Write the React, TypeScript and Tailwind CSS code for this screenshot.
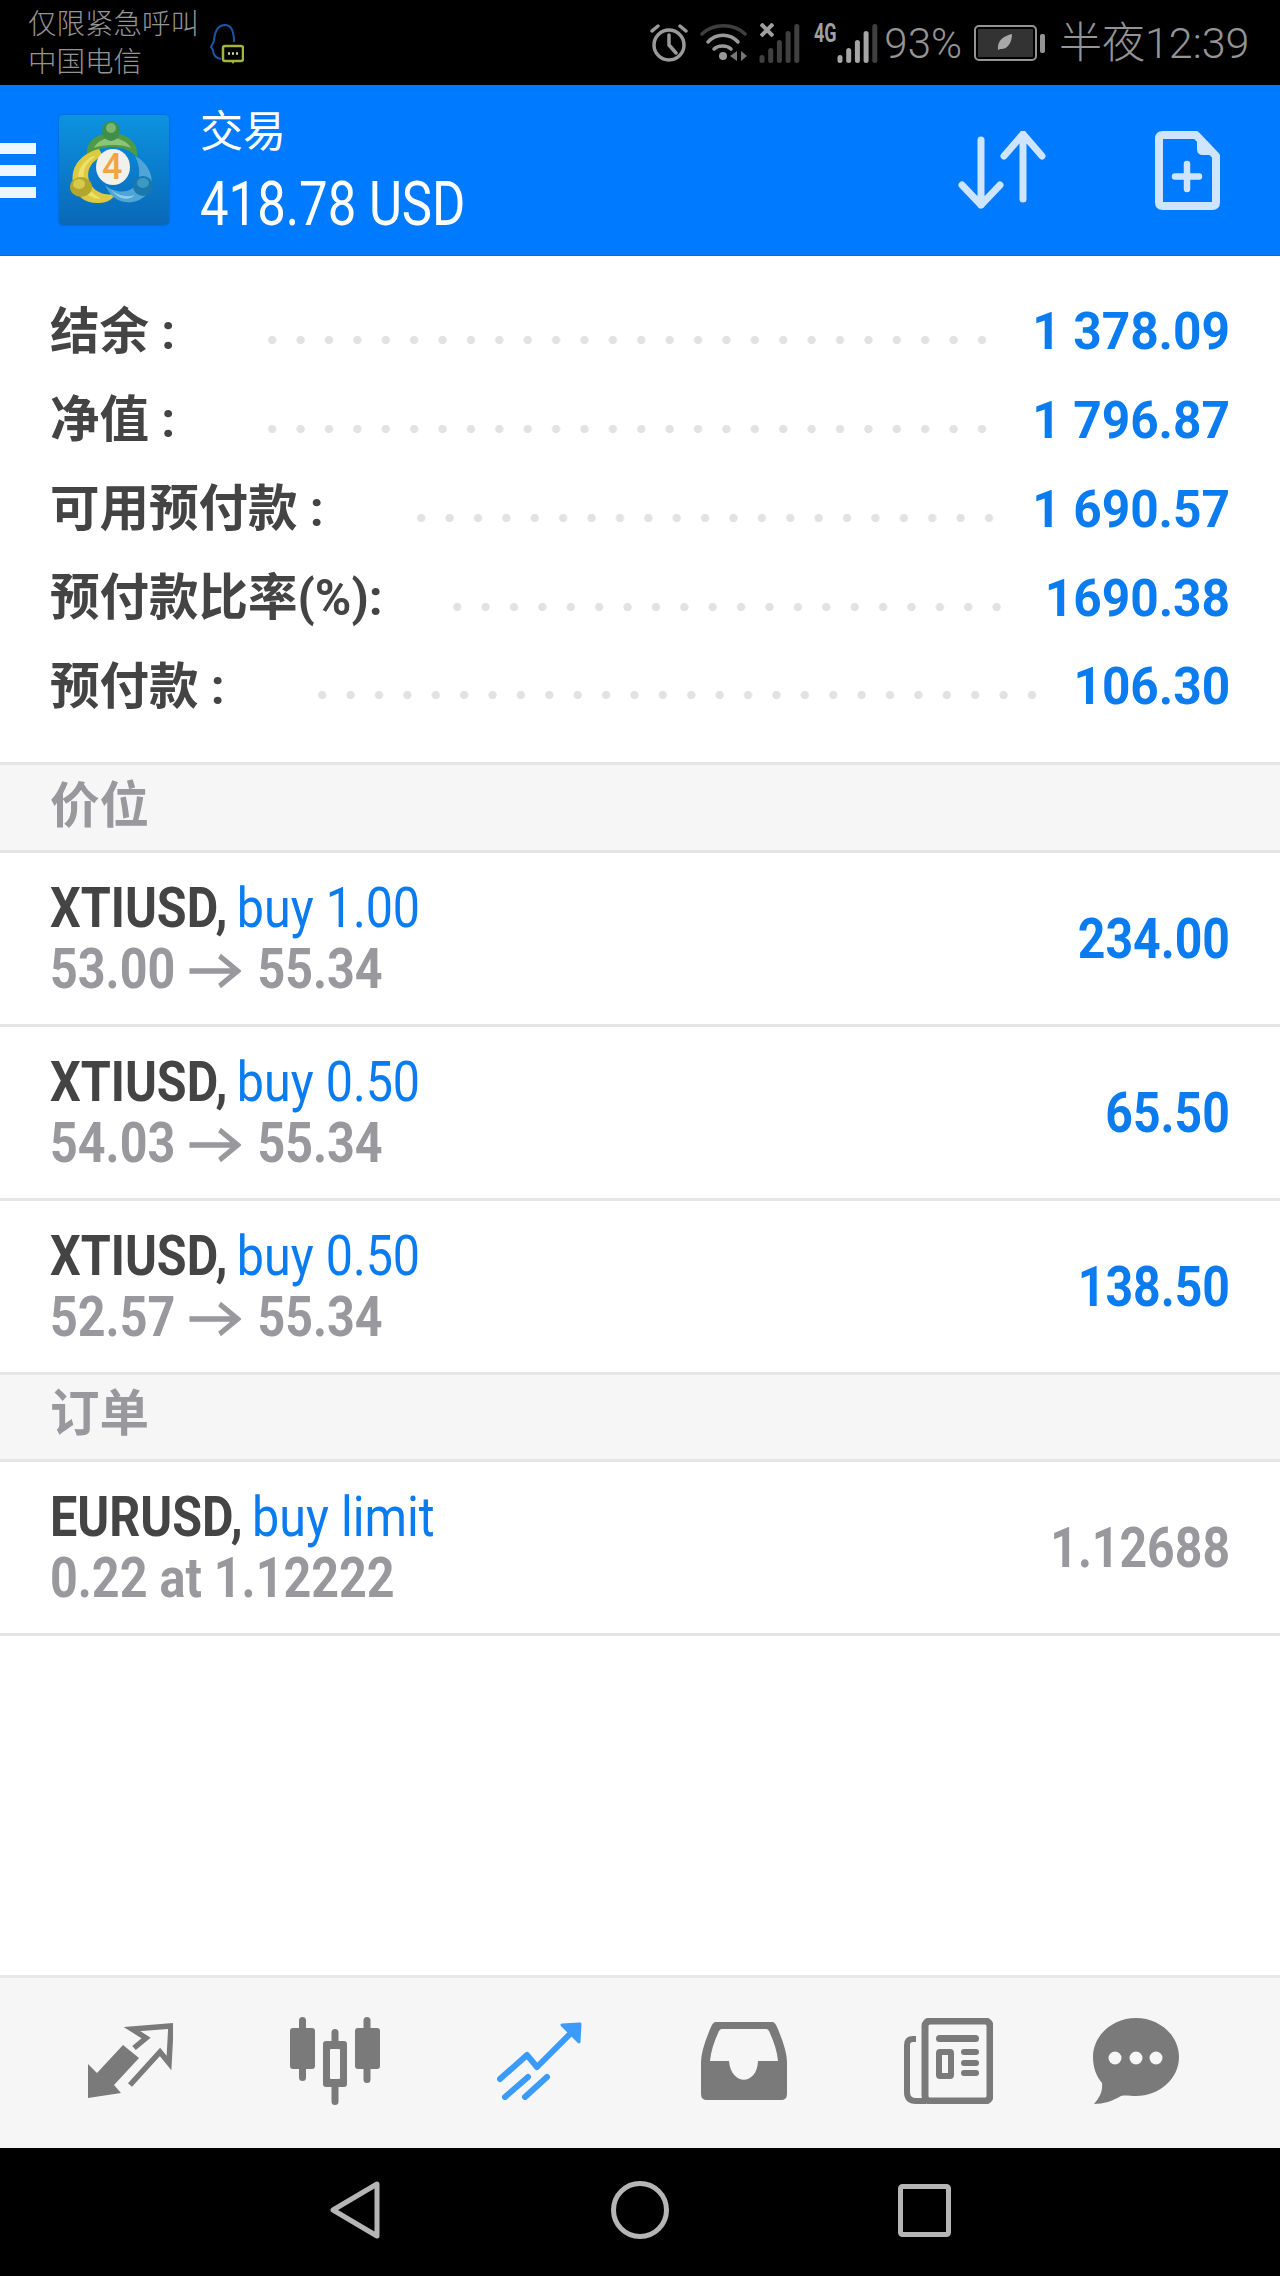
const CJK = "font-['Roboto','Noto_Sans_CJK_SC',sans-serif]";

const balances = [
  { label: "结余 :", value: "1 378.09", gap: "ml-[83px]" },
  { label: "净值 :", value: "1 796.87", gap: "ml-[83px]" },
  { label: "可用预付款 :", value: "1 690.57", gap: "ml-[83px]" },
  { label: "预付款比率(%):", value: "1690.38", gap: "ml-[60px]" },
  { label: "预付款 :", value: "106.30", gap: "ml-[83px]" },
];

const positions = [
  { type: "buy 1.00", from: "53.00", to: "55.34", profit: "234.00" },
  { type: "buy 0.50", from: "54.03", to: "55.34", profit: "65.50" },
  { type: "buy 0.50", from: "52.57", to: "55.34", profit: "138.50" },
];

function BalanceRow({ label, value, gap }: { label: string; value: string; gap: string }) {
  return (
    <div className="flex h-[88.75px] items-center">
      <span className="whitespace-nowrap text-[49.500px] leading-none font-bold text-[#444444]">{label}</span>
      <div className={`mt-[16px] mr-[24px] h-[10px] flex-1 bg-[radial-gradient(circle,#e2e2e4_3.8px,transparent_4.4px)] bg-[length:28.4px_10px] bg-repeat-x ${gap}`} />
      <span className="origin-right scale-x-[0.955] whitespace-nowrap text-[52px] leading-none font-bold text-[#0a7cf0]">{value}</span>
    </div>
  );
}

function SectionTitle({ title, height }: { title: string; height: string }) {
  return (
    <div className={`flex items-center border-y-[3px] border-[#e5e5e7] bg-[#f6f6f7] px-[50px] text-[49.500px] font-bold text-[#98989d] ${height}`}>
      {title}
    </div>
  );
}

function TradeRow({ name, type, sub, right, rightClass }: { name: string; type: string; sub: React.ReactNode; right: string; rightClass: string }) {
  return (
    <div className="flex h-[171px] items-center justify-between px-[50px]">
      <div className="origin-left scale-x-[0.865] text-[56px] leading-[61px] whitespace-nowrap">
        <div>
          <span className="font-bold text-[#444444]">{name}, </span>
          <span className="ml-[-3px] text-[#0a7cf0]">{type}</span>
        </div>
        <div className="font-bold text-[#98989d]">{sub}</div>
      </div>
      <span className={`origin-right scale-x-[0.86] text-[56px] leading-none font-bold ${rightClass}`}>{right}</span>
    </div>
  );
}

function Move({ from, to }: { from: string; to: string }) {
  return (
    <>
      {from}
      <svg viewBox="0 0 60 40" className="mr-[19px] ml-[16px] inline-block h-[40px] w-[60px] align-[-3px]" fill="none" stroke="#98989d" strokeWidth="5.5">
        <path d="M0 20H56M35 5L56 20L35 35" />
      </svg>
      {to}
    </>
  );
}

function Logo() {
  return (
    <div className="relative h-[110px] w-[110px] shrink-0 rounded-[4px] bg-gradient-to-b from-[#0c93e0] to-[#0a68b8] shadow-[0_0_2px_#0a5aa0]">
      <svg viewBox="0 0 110 110" className="absolute inset-0 h-full w-full">
        <path d="M28 40C26 26 40 18 52 18C66 18 80 26 78 42C70 34 62 32 54 32C46 32 36 34 28 40Z" fill="#4f9a45" />
        <path d="M35 33C38 26 46 23 52 23C60 23 68 26 72 33C64 29 44 29 35 33Z" fill="#8cc47a" />
        <ellipse cx="52" cy="16" rx="9" ry="10" fill="#3f8f4a" />
        <ellipse cx="52" cy="13" rx="5" ry="5" fill="#78b870" />
        <path d="M40 34C24 38 11 50 14 68C16 82 28 89 40 88C48 88 54 84 58 78C48 82 36 78 31 68C26 56 32 46 44 41Z" fill="#dccb42" />
        <path d="M34 41C24 46 17 56 20 67C23 78 33 84 42 84C35 79 27 74 25 64C23 55 28 47 36 42Z" fill="#efe06a" />
        <ellipse cx="22" cy="72" rx="11" ry="10" fill="#b3a62e" />
        <ellipse cx="20" cy="69" rx="6" ry="5" fill="#d6c94c" />
        <path d="M76 41C88 47 95 60 92 71C89 83 76 89 66 87C56 86 50 78 46 70C54 77 66 79 74 73C82 66 82 52 76 41Z" fill="#4fa6d6" />
        <path d="M52 75C58 80 68 83 76 80C70 86 60 85 52 75Z" fill="#8fd0ea" />
        <ellipse cx="84" cy="71" rx="10" ry="10" fill="#1a78ac" />
        <ellipse cx="84" cy="68" rx="6" ry="5" fill="#3b9ac4" />
        <ellipse cx="54" cy="52" rx="17" ry="18" fill="#f2f0ea" />
      </svg>
      <span className="absolute top-[31px] left-[43px] text-[36px] leading-[42px] font-medium text-[#f0a640]">4</span>
    </div>
  );
}

function Alarm() {
  return (
    <svg viewBox="0 0 38 40" className="h-[40px] w-[38px]" fill="none" stroke="#999999" strokeWidth="3.5" strokeLinecap="round">
      <circle cx="19" cy="22" r="15" />
      <path d="M19 12V22L26 30M2 8L8 3M36 8L30 3" />
    </svg>
  );
}

function Wifi() {
  return (
    <svg viewBox="0 0 47 39" className="ml-[12px] h-[39px] w-[47px]" fill="none" stroke="#999999" strokeWidth="3.5" strokeLinecap="round">
      <path d="M2 11C13 0 34 0 45 11" stroke="#3f3f3f" />
      <path d="M8 19C16 10 30 10 38 19M14 26C18 22 27 22 31 26" />
      <circle cx="23" cy="33" r="4" fill="#999999" stroke="none" />
      <path d="M37 28V38L30 33ZM41 28V38L47 33Z" fill="#777777" stroke="none" />
    </svg>
  );
}

function SimBars({ bright }: { bright: number }) {
  const heights = [8, 15, 23, 32, 39];
  return (
    <svg viewBox="0 0 41 39" className="h-[39px] w-[41px]">
      {heights.map((h, i) => (
        <rect key={i} x={i * 8.7 + 0.5} y={39 - h} width="5" height={h} rx="2.5" fill={i < bright ? "#a5a5a5" : "#404040"} />
      ))}
    </svg>
  );
}

function StatusBar() {
  return (
    <div className="flex h-[85px] shrink-0 items-center bg-black pl-[28px] text-[#949494]">
      <div className="w-[180px] pt-[3px] text-[28.500px] leading-[38px] font-light whitespace-nowrap">
        <div>仅限紧急呼叫</div>
        <div>中国电信</div>
      </div>
      <svg viewBox="0 0 36 44" className="mt-[2px] h-[44px] w-[36px]" fill="none">
        <path d="M26 20C26 9 23 3 17 3C10 3 7 9 6 18C6 21 4 22 3 25L5 28C5 33 8 36 13 37" stroke="#1c56a8" strokeWidth="2" />
        <rect x="15" y="24" width="20" height="15" rx="2" stroke="#a2b53a" strokeWidth="2.5" />
        <path d="M23 39H27L25 42Z" fill="#a2b53a" />
        <path d="M20 31.500H30" stroke="#cfd8a0" strokeWidth="2.5" strokeDasharray="2 2" />
      </svg>
      <div className="flex-1" />
      <Alarm />
      <Wifi />
      <div className="relative ml-[12px] pt-[1px]">
        <SimBars bright={0} />
        <svg viewBox="0 0 14 14" className="absolute top-[0px] left-[1px] h-[14px] w-[14px]" fill="none" stroke="#a0a0a0" strokeWidth="4">
          <path d="M1 1L13 13M13 1L1 13" />
        </svg>
      </div>
      <div className="relative ml-[14px] pt-[1px] pl-[23px]">
        <span className="absolute top-[-2px] left-0 origin-left scale-x-[0.72] text-[25px] leading-none font-bold text-[#a0a0a0]">4G</span>
        <SimBars bright={4} />
      </div>
      <span className="ml-[6px] pt-[2px] text-[42px] leading-none font-light">93%</span>
      <svg viewBox="0 0 72 36" className="ml-[12px] h-[36px] w-[72px]" fill="none">
        <rect x="1" y="1" width="61" height="34" rx="4" stroke="#949494" strokeWidth="2" />
        <rect x="4" y="4" width="55" height="28" rx="1" fill="#333333" />
        <path d="M24 25C23 15 30 11 38 9C38 18 33 25 26 24Z" fill="#a8a8a8" />
        <rect x="66" y="9" width="5" height="19" rx="2" fill="#949494" />
      </svg>
      <span className={`ml-[13px] w-[221px] pt-[2px] text-[43px] leading-none font-light whitespace-nowrap ${CJK}`}>半夜12:39</span>
    </div>
  );
}

function Header() {
  return (
    <div className="flex h-[171px] shrink-0 items-center border-b border-[#0a6cd0] bg-[#007aff]">
      <div className="flex w-[36px] flex-col gap-[11px]">
        <div className="h-[11px] bg-[#eef6ff]" />
        <div className="h-[11px] bg-[#eef6ff]" />
        <div className="h-[11px] bg-[#eef6ff]" />
      </div>
      <div className="ml-[23px]">
        <Logo />
      </div>
      <div className="ml-[31px] text-white">
        <div className="text-[43px] leading-[56px]">交易</div>
        <div className="mt-[11px] origin-left scale-x-[0.82] text-[62px] leading-[66px] whitespace-nowrap">418.78 USD</div>
      </div>
      <div className="flex-1" />
      <svg viewBox="0 0 88 78" className="h-[78px] w-[88px]" fill="none" stroke="#cfe5ff" strokeWidth="7" strokeLinecap="round" strokeLinejoin="round">
        <path d="M23 9V74M4 54L23 74L42 54M65 3V68M46 25L65 3L84 25" />
      </svg>
      <svg viewBox="0 0 65 79" className="mr-[60px] ml-[109px] h-[79px] w-[65px]" fill="none">
        <path d="M8 4H41L61 25V71Q61 75 57 75H8Q4 75 4 71V8Q4 4 8 4Z" stroke="#cfe5ff" strokeWidth="8" strokeLinejoin="round" />
        <path d="M42 4V18Q42 24 48 24H61Z" fill="#cfe5ff" />
        <path d="M32 33V58M20 45.500H44" stroke="#cfe5ff" strokeWidth="6.5" strokeLinecap="round" />
      </svg>
    </div>
  );
}

function BottomBar() {
  const gray = "#7a7a7a";
  const bg = "#f6f6f7";
  return (
    <div className="flex h-[173px] shrink-0 items-center border-t-[3px] border-[#e8e8ea] bg-[#f6f6f7] pb-[5px] pl-[88px]">
      <svg viewBox="0 0 85 75" className="h-[75px] w-[85px]" fill="none">
        <path d="M0 75V41L9 50L35 22L51 35L26 62L33 70Z" fill={gray} />
        <path d="M46 25L58 15L44 6L83 3L81 40L72 29L42 62" stroke={gray} strokeWidth="5.5" />
      </svg>
      <svg viewBox="0 0 90 88" className="ml-[117px] h-[88px] w-[90px]" fill={gray}>
        <rect x="9" y="0" width="7" height="64" rx="3.5" />
        <rect x="0" y="11" width="25" height="41" rx="3" />
        <rect x="41.500" y="12" width="7" height="76" rx="3.5" />
        <rect x="33" y="24" width="24" height="46" rx="3" />
        <rect x="40" y="32" width="10" height="30" rx="1" fill={bg} />
        <rect x="73.500" y="0" width="7" height="66" rx="3.5" />
        <rect x="65" y="11" width="25" height="41" rx="3" />
      </svg>
      <svg viewBox="0 0 85 78" className="ml-[117px] h-[78px] w-[85px]" fill="none" stroke="#3b9bfb" strokeWidth="6" strokeLinecap="round" strokeLinejoin="round">
        <path d="M3 57L30 33L40 45L78 7M8 75L31 55M28 75L50 55" />
        <path d="M65 3L83 2L82 20Z" fill="#3b9bfb" strokeWidth="3" />
      </svg>
      <svg viewBox="0 0 86 78" className="ml-[119px] h-[78px] w-[86px]">
        <path d="M15 0H71Q74 0 76 5Q86 28 86 40V72Q86 78 80 78H6Q0 78 0 72V40Q0 28 10 5Q12 0 15 0Z" fill={gray} />
        <path d="M21 7H65Q67 7 68 9Q76 26 77 39H57C56 64 30 64 28 39H9Q10 26 18 9Q19 7 21 7Z" fill={bg} />
      </svg>
      <svg viewBox="0 0 89 86" className="ml-[117px] h-[86px] w-[89px]" fill="none">
        <rect x="21" y="3" width="65" height="80" rx="5" stroke={gray} strokeWidth="7" />
        <path d="M12 21H9Q3 21 3 27V74Q3 83 12 83H22" stroke={gray} strokeWidth="6" />
        <rect x="32" y="17" width="43" height="7" rx="3.5" fill={gray} />
        <rect x="35" y="34" width="12" height="24" rx="1" stroke={gray} strokeWidth="6" />
        <rect x="57" y="31" width="18" height="6" rx="3" fill={gray} />
        <rect x="57" y="42" width="18" height="6" rx="3" fill={gray} />
        <rect x="57" y="52" width="18" height="6" rx="3" fill={gray} />
      </svg>
      <svg viewBox="0 0 86 86" className="ml-[100px] h-[86px] w-[86px]">
        <path d="M43 0C66 0 86 17 86 39C86 61 66 78 43 78C37 78 33 77 28 78C20 83 10 86 1 86C6 80 10 74 9 65C3 58 0 49 0 39C0 17 20 0 43 0Z" fill={gray} />
        <circle cx="22" cy="40" r="6.5" fill={bg} />
        <circle cx="43" cy="40" r="6.5" fill={bg} />
        <circle cx="63" cy="40" r="6.5" fill={bg} />
      </svg>
    </div>
  );
}

function NavBar() {
  return (
    <div className="flex h-[128px] shrink-0 items-center bg-black pb-[4px] pl-[330px]">
      <svg viewBox="0 0 50 58" className="h-[58px] w-[50px]" fill="none" stroke="#b5b5b5" strokeWidth="5" strokeLinejoin="round">
        <path d="M47 3V55L3 29Z" />
      </svg>
      <svg viewBox="0 0 58 58" className="ml-[231px] h-[58px] w-[58px]" fill="none" stroke="#b5b5b5" strokeWidth="5">
        <circle cx="29" cy="29" r="26.5" />
      </svg>
      <svg viewBox="0 0 53 53" className="ml-[229px] h-[53px] w-[53px]" fill="none" stroke="#b5b5b5" strokeWidth="5" strokeLinejoin="round">
        <rect x="2.500" y="2.500" width="48" height="48" rx="2" />
      </svg>
    </div>
  );
}

export default function App() {
  return (
    <div className={`flex h-[2276px] w-[1280px] flex-col overflow-hidden bg-white ${CJK}`}>
      <StatusBar />
      <Header />
      <main className="flex-1">
        <section className="h-[506px] px-[50px] pt-[32px]">
          {balances.map((b) => (
            <BalanceRow key={b.label} label={b.label} value={b.value} gap={b.gap} />
          ))}
        </section>
        <SectionTitle title="价位" height="h-[91px] pb-[2px]" />
        {positions.map((p, i) => (
          <div key={i} className={i < 2 ? "border-b-[3px] border-[#e5e5e7]" : ""}>
            <TradeRow name="XTIUSD" type={p.type} sub={<Move from={p.from} to={p.to} />} right={p.profit} rightClass="text-[#0a7cf0]" />
          </div>
        ))}
        <SectionTitle title="订单" height="h-[90px] pb-[6px]" />
        <div className="border-b-[3px] border-[#e5e5e7]">
          <TradeRow name="EURUSD" type="buy limit" sub="0.22 at 1.12222" right="1.12688" rightClass="text-[#98989d]" />
        </div>
      </main>
      <BottomBar />
      <NavBar />
    </div>
  );
}
